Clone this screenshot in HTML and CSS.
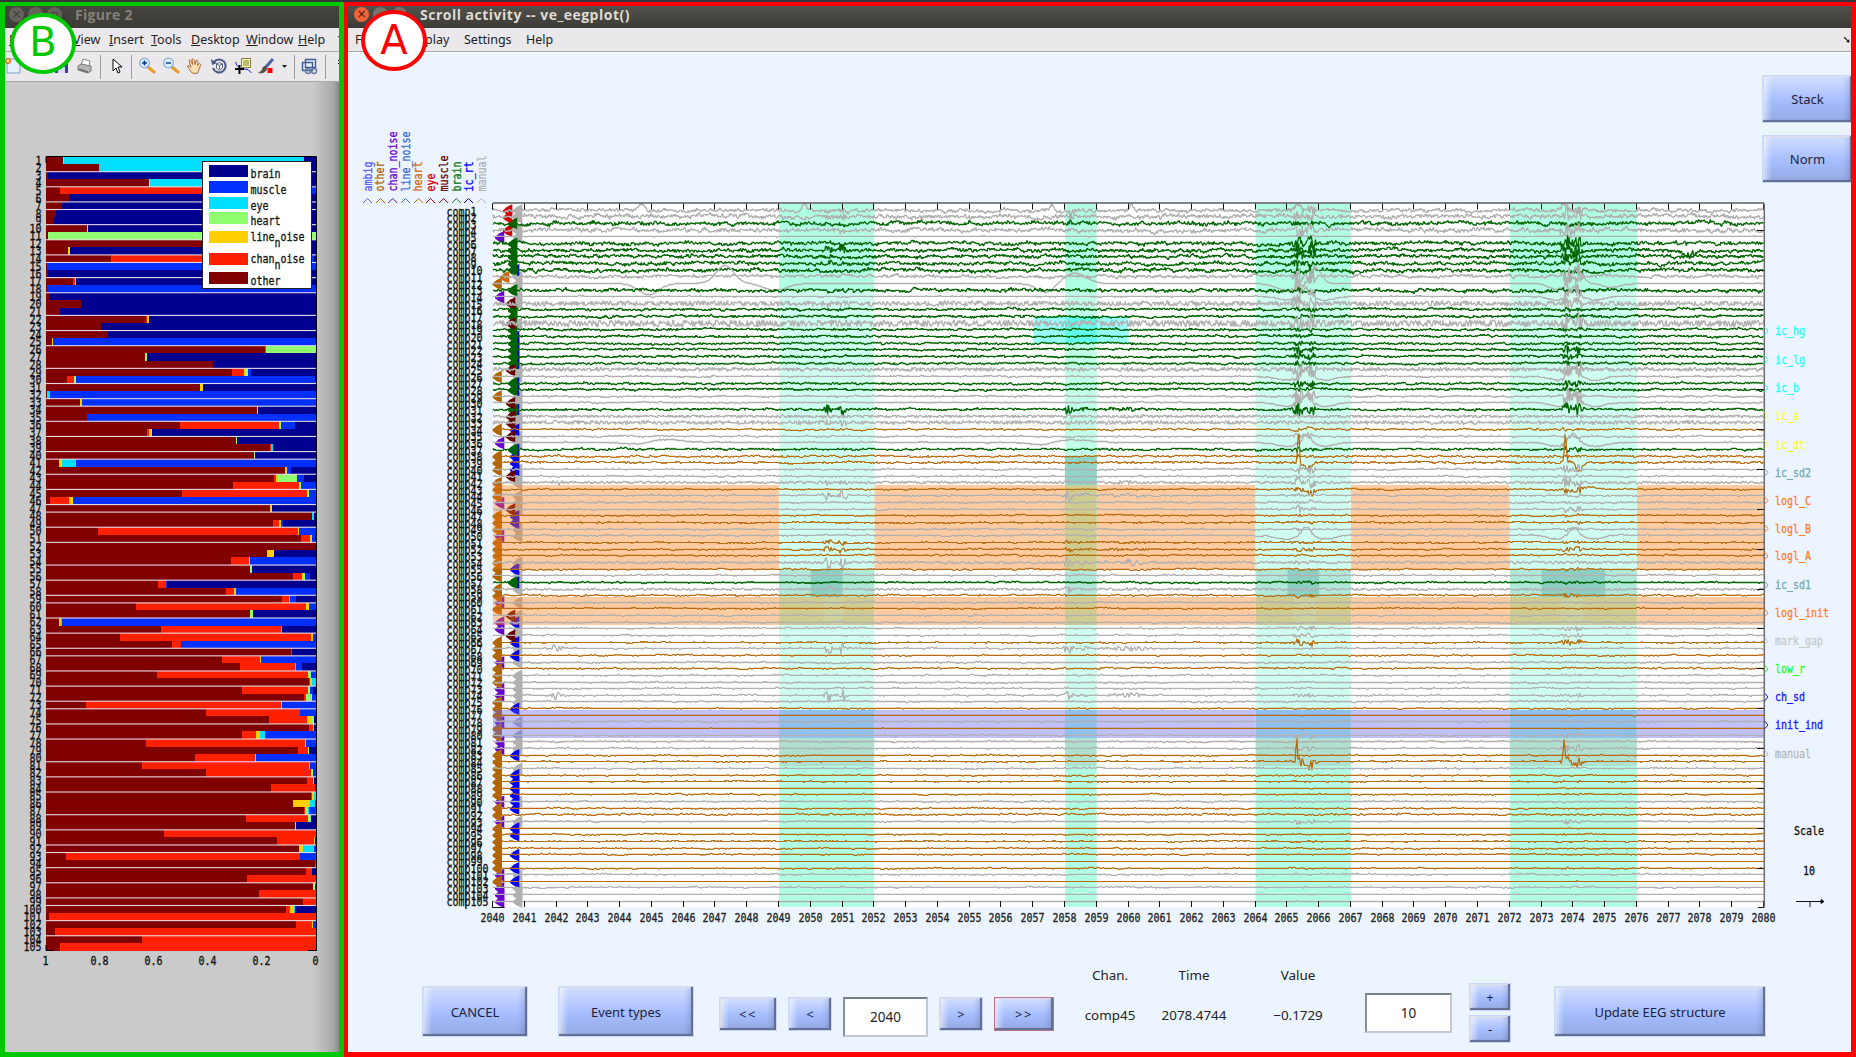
FILE: index.html
```html
<!DOCTYPE html>
<html lang="en">
<head>
<meta charset="utf-8">
<title>Scroll activity -- ve_eegplot()</title>
<link rel="stylesheet" href="styles.css">
</head>
<body>
<div class="desktop">
  <section class="window figure">
    <div class="badge badge-b"><span>B</span></div>
    <header class="titlebar dim">
      <i class="dot">×</i><i class="dot"></i><i class="dot">▫</i><b class="figure-title">Figure 2</b>
    </header>
    <nav class="menubar figure-menu">
      <span class="m-file"><u>F</u></span><span class="m-view"><u>V</u>iew</span><span class="m-insert"><u>I</u>nsert</span><span class="m-tools"><u>T</u>ools</span><span class="m-desk"><u>D</u>esktop</span><span class="m-win"><u>W</u>indow</span><span class="m-help"><u>H</u>elp</span><span class="m-more">↴</span>
    </nav>
    <svg class="toolbar" width="334" height="30" viewBox="5 52 334 30">
      <path d="M7 59h9l4 4v10h-13z" fill="#e4f0fc" stroke="#7f9fd0"/><circle cx="8" cy="61" r="2.5" fill="#ffd070" stroke="#d84a18"/>
      <path d="M55 58h13v15h-13z" fill="#3b3f97"/><path d="M58 59h7v5h-7zM58 67h7v6h-7z" fill="#d8dcf4"/>
      <path d="M81 66l2-7 7 2-1 5z" fill="#fff" stroke="#888"/><path d="M78 66l3-2 10 2v5l-3 2-10-3z" fill="#b5b5b5" stroke="#777"/><path d="M79 69l9 3" stroke="#555"/>
      <path d="M100.500 55v24M131.500 55v24M294.500 55v24M325.500 55v24" stroke="#9a9a9a"/>
      <path d="M113 59v12l3-3 2 5 2-1-2-5h4z" fill="#fff" stroke="#000"/>
      <g id="zoom"><path d="M148 67l6 5" stroke="#e49b2e" stroke-width="3" stroke-linecap="round"/><circle cx="144.500" cy="63" r="4.800" fill="#d8f0ff" stroke="#8baed4" stroke-width="1.300"/></g>
      <use href="#zoom" x="24"/>
      <path d="M142 63h5M144.500 60.500v5M166 63h5" stroke="#103c90" stroke-width="1.600"/>
      <path d="M192 73c-2-3-4-5-4.500-7 1-1 2 0 3.500 1.500l-2-7c1-1 2 0 2.500 1l1 3-.500-5c1-1 2 0 2.500 1l.5 4 1-4c1-1 2 0 2 1l-.5 4 2-2c1 0 1.500 1 1 2l-2 5-1 3z" fill="#ffe0b4" stroke="#a86c3c"/>
      <path d="M214 62a6.500 6.500 0 1 1-1 6" fill="none" stroke="#4a5a80" stroke-width="2"/><path d="M211 59l1 6 5-2z" fill="#4a5a80"/><path d="M216.500 64l3-1.500 3 1.500v4l-3 2-3-2zM216.500 64l3 1.500 3-1.500M219.500 65.500v4" fill="#fff" stroke="#54617f"/>
      <path d="M235.500 62q3 8 8 7t8 4" fill="none" stroke="#1818ff"/><path d="M241.500 58.500h9v9h-9z" fill="#ffffae" stroke="#88803c"/><path d="M243 61h6M243 63h6M243 65h6" stroke="#77733d"/><path d="M235 69h9M239.500 65v9" stroke="#000" stroke-width="2"/>
      <path d="M273 59l-8 9" stroke="#5060b0" stroke-width="3"/><path d="M266 66c-3 0-4 2-4 4l-4 3c5 1 9-1 9-5z" fill="#554"/><path d="M267.500 68h5v5h-5z" fill="#f00"/>
      <path d="M282 65h5l-2.500 3z" fill="#222"/>
      <path d="M305.500 59.500h10v8h-10zM302.500 62.500h10v8h-10z" fill="#e8eef8" stroke="#3d5c92" stroke-width="1.400"/><circle cx="308" cy="71" r="2.500" fill="none" stroke="#667b9d" stroke-width="1.500"/><circle cx="314" cy="71" r="2.500" fill="none" stroke="#667b9d" stroke-width="1.500"/>
      <path d="M338 60l2 2-2 2" fill="none" stroke="#222"/>
      <path d="M5 81.500h334" stroke="#a9a6aa"/>
    </svg>
    <svg class="bar-chart" id="bars" width="334" height="970" viewBox="5 82 334 970"></svg>
  </section>

  <section class="window scroller">
    <div class="badge badge-a"><span>A</span></div>
    <header class="titlebar">
      <i class="dot close">×</i><i class="dot"></i><i class="dot"></i><b class="scroller-title">Scroll activity -- ve_eegplot()</b>
    </header>
    <nav class="menubar scroller-menu">
      <span class="s-file">F</span><span class="s-display">play</span><span class="s-settings">Settings</span><span class="s-help">Help</span><span class="s-more">➘</span>
    </nav>
    <main class="workspace">
      <svg class="traces" id="traces" width="1414" height="893" viewBox="348 52 1414 893"></svg>
      <aside class="side">
        <button class="btn side-btn">Stack</button>
        <button class="btn side-btn">Norm</button>
        <svg class="marks" id="marks" width="89" height="762" viewBox="1762 183 89 762"></svg>
      </aside>
    </main>
    <footer class="controls">
      <button class="btn cancel">CANCEL</button>
      <button class="btn events">Event types</button>
      <div class="pager">
        <button class="btn far">&lt;&lt;</button>
        <button class="btn near">&lt;</button>
        <div class="field position">2040</div>
        <button class="btn near">&gt;</button>
        <button class="btn far focused">&gt;&gt;</button>
      </div>
      <dl class="readout">
        <dt>Chan.</dt><dt>Time</dt><dt>Value</dt>
        <dd>comp45</dd><dd>2078.4744</dd><dd>−0.1729</dd>
      </dl>
      <div class="field scale">10</div>
      <div class="stepper"><button class="btn step">+</button><button class="btn step">-</button></div>
      <button class="btn update">Update EEG structure</button>
    </footer>
  </section>
</div>
<script src="plots.js"></script>
</body>
</html>
```
FILE: styles.css
```css
* { box-sizing: border-box; }
body { margin: 0; background: #35343a; font-family: "Noto Sans", "Open Sans", sans-serif; color: #222; overflow: hidden; }
.desktop { display: flex; width: 1856px; height: 1057px; padding-top: 2px; }
.window { position: relative; display: flex; flex-direction: column; height: 1055px; overflow: hidden; }
.figure { width: 344px; border: 5px solid #00c800; border-top-width: 4px; background: #cacaca; }
.scroller { width: 1512px; border: 5px solid #f00; border-left-width: 4px; border-top-width: 4px; background: #ecf5ff; }
.badge { position: absolute; z-index: 2; display: flex; align-items: center; justify-content: center; width: 66px; height: 61px; border: 4px solid; border-radius: 50%; background: #fff; font: 40px/1 "DejaVu Sans", sans-serif; }
.badge-a { left: 13px; top: 4px; color: #f00; }
.badge-b { left: 5px; top: 7px; color: #00c800; }
.badge-b span { position: relative; top: -2px; }
.badge-a span { position: relative; top: -1px; }
.titlebar { display: flex; flex: none; align-items: center; height: 22px; padding: 0 0 5px 6px; gap: 4px; background: linear-gradient(#53514b, #3c3b37); color: #dfdbd2; font-size: 14px; white-space: nowrap; }
.titlebar b { font-family: "Open Sans", sans-serif; }
.dim { color: #85827b; padding-left: 4px; background: linear-gradient(#45443f, #3c3b37); }
.dot { width: 15px; height: 15px; border-radius: 50%; background: #77746c; color: #3c3b37; font: 12px/14px "DejaVu Sans", sans-serif; text-align: center; }
.dim .dot { background: #65625c; }
.dot.close { background: #ee6337; color: #4a1c0c; }
.figure-title { margin-left: 9px; letter-spacing: .3px; }
.scroller-title { margin-left: 9px; letter-spacing: .5px; }
.menubar { display: flex; flex: none; height: 24px; background: #ebe8ec; border-bottom: 1px solid #a9a6aa; font-size: 12.500px; line-height: 23px; white-space: nowrap; }
.menubar span { flex: none; }
.figure-menu { padding-left: 4px; }
.m-file { width: 64px; }
.m-view { width: 36px; }
.m-insert { width: 42px; }
.m-tools { width: 40px; }
.m-desk { width: 55px; }
.m-win { width: 52px; }
.m-help { width: 37px; }
.m-more { font-family: "DejaVu Sans", sans-serif; }
.scroller-menu { padding-left: 7px; }
.s-file { width: 70px; }
.s-display { width: 39px; }
.s-settings { width: 62px; }
.s-more { margin-left: auto; font-family: "DejaVu Sans", sans-serif; font-size: 10px; color: #000; }
.toolbar { flex: none; display: block; background: #ebe8ec; }
.bar-chart { flex: none; display: block; background: linear-gradient(to right, #cacaca 0 307px, #aaa 328px, #888 334px); }
.bar-chart text, .traces text, .marks text { font-family: "DejaVu Sans Mono", monospace; font-size: 10px; stroke-width: .25px; }
.workspace { display: flex; flex: none; height: 893px; border-top: 1px solid #fff; }
.traces { flex: none; overflow: visible; margin-top: -1px; }
.side { display: flex; flex: none; flex-direction: column; width: 89px; padding-top: 22px; }
.side-btn { flex: none; width: 91px; height: 48px; margin-bottom: 12px; font-size: 12.500px; }
.marks { flex: none; margin-top: -12px; overflow: visible; }
.btn { flex: none; padding: 0; font-family: "Noto Sans", sans-serif; font-size: 13px; color: #20223c; border: 1px solid #b4c6fb; outline: 1px solid #c7d7ff; outline-offset: -1px; background: linear-gradient(to right, rgba(255,255,255,.6), rgba(255,255,255,0) 9px, rgba(60,70,120,0) calc(100% - 9px), rgba(60,70,120,.22)), linear-gradient(#d3dfff, #a7beff 52%, #93a8e2); box-shadow: inset -2px -2px 1px #626c91, inset 1px 1px #e0dde5; white-space: nowrap; }
.controls { display: flex; flex: none; align-items: flex-start; height: 107px; padding: 41px 0 0 74px; }
.cancel { width: 106px; height: 51px; margin-right: 30px; }
.events { width: 136px; height: 51px; margin-right: 25px; }
.pager { display: flex; flex: none; gap: 11px; padding-top: 11px; width: 336px; }
.far { width: 58px; height: 34px; letter-spacing: 1.500px; }
.near { width: 44px; height: 34px; }
.focused { width: 60px; border-color: #c06f8e; outline-color: #c06f8e; }
.field { display: flex; flex: none; align-items: center; justify-content: center; border: 2px solid #c2c8d5; border-top-color: #777d89; border-left-color: #8a909e; background: #fff; font-size: 13.500px; }
.position { width: 85px; height: 40px; }
.readout { display: grid; flex: none; grid-template-columns: 84px 84px 124px; grid-template-rows: 40px 40px; align-items: center; justify-items: center; width: 292px; margin: -31px 0 0 13px; font-size: 13.400px; }
.readout dd { margin: 0; }
.scale { width: 87px; height: 40px; margin: 7px 0 0 5px; }
.stepper { display: flex; flex: none; flex-direction: column; gap: 4px; margin: -3px 43px 0 17px; }
.step { width: 42px; height: 28px; }
.update { width: 212px; height: 51px; }
```
FILE: plots.js
```js
const NS = 'http://www.w3.org/2000/svg';

function add(parent, name, attrs, text) {
  const node = document.createElementNS(NS, name);
  for (const key in attrs) node.setAttribute(key, attrs[key]);
  if (text !== undefined) node.textContent = text;
  parent.appendChild(node);
  return node;
}
const rect = (p, x, y, w, h, fill, extra) => add(p, 'rect', Object.assign({ x, y, width: w, height: h, fill }, extra));
// Tall, narrow fixed-width label, centred vertically on y.
function label(p, x, y, text, anchor = 'start', fill = '#111', rotate = '') {
  return add(p, 'text', { 'text-anchor': anchor, fill, stroke: fill, transform: `translate(${x} ${y})${rotate} scale(1 1.2)`, y: 3.5 }, text);
}

/* ---------- classification probabilities ---------- */
const HUE = { o: '#800000', c: '#ff2000', l: '#ffcf00', h: '#8fff70', e: '#00dfff', m: '#0030ff', b: '#00008f' };
// Class and right edge of every segment, on a 138..948 axis.
const ROWS = `o189 l192 e912 b948|o297 e936 b948|o144 b948|o446 l449 e930 b948|o180 c933 m948|o210 b948|o186 b948|o168 b948|o159 b948|o261 h264 b948
o144 h948|o930 b948|o204 l210 b948|o333 c930 m942 b948|o140 m948|o145 b948|o219 c225 h228 b948|o142 m948|o148 b948|o242 b948
o180 b948|o438 c441 l447 b948|o303 b948|o323 b948|o156 l159 m948|o795 c798 h948|o435 l438 h441 b948|o639 b948|o696 c732 l735 h744 m752 b948|o201 c222 h228 m946 b948
o600 l609 b948|o142 e150 m948|o240 l246 m948|o771 l774 b948|o261 m948|o540 c837 h843 m885 b948|o441 c447 l456 b948|o708 h711 b948|o810 c814 e819 b948|o762 h765 b948
o178 l186 e228 m948|o855 l861 m872 b948|o822 c828 l833 h891 m912 b948|o699 c897 h903 m948|o546 c921 h926 m948|o149 c207 l219 m948|o810 l816 b948|o936 e941 b948|o819 c837 l843 m848 b948|o294 c894 l897 m948
o903 c930 l936 m945 b948|o948|o801 l822 b948|o693 c747 l750 m948|o750 h756 b948|o879 c906 l909 h915 m930 b948|o474 c498 m501 b948|o678 c702 l705 h708 m948|o846 c867 e870 m888 b948|o408 c918 l927 m948
o750 h760 b948|o178 l183 e186 m948|o483 c843 e846 b948|o360 c933 l939 m948|o516 c543 m948|o873 c877 b948|o666 c780 l783 m948|o720 c885 e888 m906 b948|o471 c924 h933 m948|o928 c931 l935 e948
o726 c924 h930 m939 b948|o912 c918 h936 m948|o258 c843 l846 m948|o618 c900 m948|o807 c921 l937 h942 b948|o927 c938 h942 b948|o726 c768 l780 e795 m948|o438 c915 l918 m948|o894 c924 h927 b948|o585 c765 h768 m948
o426 c927 e930 m948|o618 c933 h940 m948|o921 c939 l942 b948|o813 c945 m948|o933 c936 l941 e948|o879 l930 e945 m948|o912 c916 h924 e927 m948|o738 c924 h933 b948|o885 l888 b948|o492 c948
o831 c941 l945 b948|o897 l909 e942 m948|o198 c900 m948|o945 c948|o918 c936 b948|o741 c948|o939 h944 m948|o777 c948|o909 c948|o858 c870 l882 e885 b948
o147 c948|o888 c936 l939 m948|o165 c948|o426 c948|o180 c948`.split(/[|\n]/);
const RULES = [2, 4, 6, 7, 9, 11, 13, 14, 16, 18, 21, 23, 25, 28, 30, 32, 33, 35, 37, 39, 40, 42, 44, 46, 47, 49, 51, 54, 56, 58, 59, 61, 63, 65, 66, 68, 70, 72, 73, 75, 77, 80, 82, 84, 87, 89, 91, 92, 94, 96, 98, 99, 101, 103];

const bars = document.getElementById('bars');
const step = 7.565, top0 = 156.5;
ROWS.forEach((row, i) => {
  let from = 138;
  for (const seg of row.split(' ')) {
    const to = +seg.slice(1);
    rect(bars, from / 3, top0 + i * step, (to - from) / 3, step + .1, HUE[seg[0]], { 'shape-rendering': 'crispEdges' });
    from = to;
  }
  label(bars, 41.500, top0 + 4 + i * step, i + 1, 'end');
});
RULES.forEach(n => rect(bars, 46, top0 + n * step - .5, 270, 1.100, '#e6d8e4'));
add(bars, 'path', { d: 'M46 156.500H316.500V951M46 157v6M46 945v5.500h7M308 950.500h8', fill: 'none', stroke: '#000' });
['1', '0.8', '0.6', '0.4', '0.2', '0'].forEach((t, i) => label(bars, 45.5 + i * 54, 961, t, 'middle'));
rect(bars, 202.5, 161.5, 109, 127, '#fff', { stroke: '#222' });
[['b', 'brain', 165, 174], ['m', 'muscle', 181, 190], ['e', 'eye', 197, 206], ['h', 'heart', 212, 221], ['l', 'line', 231, 237], ['c', 'chan', 253, 259], ['o', 'other', 272, 281]].forEach(([c, t, y, ty]) => {
  rect(bars, 209, y, 39, 12, HUE[c]);
  label(bars, 250.5, ty, t);
  if (c === 'l' || c === 'c') { label(bars, 274.5, ty + 6, 'n'); label(bars, 280.5, ty, 'oise'); }
});

/* ---------- scrolling activity ---------- */
const plot = document.getElementById('traces');
const X0 = 493, X1 = 1764, Y0 = 203.5, Y1 = 907.5, SEC = (X1 - X0) / 40;
const tx = t => X0 + (t - 2040) * SEC;
const ty = n => 209.8 + (n - 1) * 6.644;
const INK = { g: '#006400', y: '#b0b0b0', o: '#b86a0c' };
const GREEN = [3, 6, 7, 8, 9, 10, 13, 16, 17, 19, 20, 21, 22, 23, 24, 27, 28, 31, 37, 57];
const BROWN = [34, 38, 39, 43, 47, 48, 51, 52, 53, 55, 59, 61, 66, 68, 70, 76, 77, 79, 83, 84, 86, 87, 88, 89, 91, 92, 94, 95, 96, 97, 98, 99, 100, 102];
const KIND = Array.from({ length: 105 }, (_, i) => GREEN.includes(i + 1) ? 'g' : BROWN.includes(i + 1) ? 'o' : 'y');

rect(plot, X0, Y0, X1 - X0, Y1 - Y0, '#fff');
const MARK = {
  other: [492.5, '#b06500'], chan: [495, '#6a00d0'], heart: [500, '#d06a10'], eye: [503, '#d40000'],
  muscle: [506, '#640000'], ic: [510, '#0000ff'], brain: [508, '#006400'], manual: [513, '#b0b0b0']
};
const SETS = {
  manual: [], ic: [10, 20, 21, 22, 23, 24, 27, 28, 31, 34, 37, 38, 39, 40, 47, 48, 55, 57, 63, 66, 68, 76, 83, 86, 87, 88, 89, 90, 91, 94, 95, 98, 100, 102],
  brain: [], muscle: [15, 18, 25, 30, 32, 33, 35, 41, 46, 62, 65], eye: [1, 2, 4], heart: [11],
  chan: [5, 14, 36, 45, 50, 60, 63, 64, 69, 73, 74, 78, 81, 82, 90, 93, 101, 103, 104, 105],
  other: [12, 26, 29, 34, 38, 39, 40, 42, 43, 44, 47, 48, 49, 51, 52, 53, 54, 55, 56, 58, 59, 61, 66, 67, 68, 70, 71, 72, 75, 76, 77, 79, 80, 83, 84, 85, 86, 87, 88, 89, 91, 92, 94, 95, 96, 97, 98, 99, 100, 102]
};
KIND.forEach((k, i) => { if (k === 'y') SETS.manual.push(i + 1); if (k === 'g') SETS.brain.push(i + 1); });
for (const name in SETS) {
  const [x, fill] = MARK[name];
  for (const n of SETS[name]) {
    const y = ty(n) + 1;
    add(plot, 'path', { d: `M${x} ${y - .5}L${x + 4} ${y - 4}L${x + 9.3} ${Math.max(204, y - 6.5)}V${y + 6}L${x + 4} ${y + 4}L${x} ${y + 1}z`, fill });
  }
}

const band = (t0, t1, y0, y1, fill, extra) => rect(plot, tx(t0), y0, (t1 - t0) * SEC, y1 - y0, fill, extra);
const ORANGE = 'rgb(255,125,25)';
[[2040, 2049], [2052, 2064], [2067, 2072], [2076, 2080]].forEach(([a, b]) => {
  band(a, b, 485, 569, ORANGE, { 'fill-opacity': .4 });
  band(a, b, 597, 625, ORANGE, { 'fill-opacity': .4 });
  band(a, b, 710, 738, '#6a62ff', { 'fill-opacity': .4 });
});
[[2049, 2052], [2058, 2059], [2064, 2067], [2072, 2076]].forEach(([a, b]) => {
  const narrow = a === 2058;
  [[204, 290, '#b0ffe4'], [290, 569, narrow ? '#c2ffea' : '#cffff0'], [569, 597, '#b0e8da'], [597, 625, '#d0cc90'], [625, 710, '#cffff0'], [710, 738, '#90c0f0'], [738, 766, '#b0e0d0'], [766, 907, '#b0ffe4']]
    .forEach(([y0, y1, fill]) => band(a, b, y0, y1, fill));
});
band(2057, 2060, 316, 343, '#98ffff');
band(2058, 2059, 316, 343, '#60ffee');
band(2058, 2059, 456, 485, '#90d4c8');
band(2058, 2059, 485, 569, '#d0cc90');
band(2050, 2051, 569, 597, '#8cd0c4');
band(2065, 2066, 569, 597, '#8cd0c4');
band(2073, 2075, 569, 597, '#8cd0c4');
band(2050.4, 2051, 598, 624, '#cfd29c');
band(2065.200, 2065.900, 598, 624, '#cfd29c');
band(2073.600, 2074.300, 598, 624, '#cfd29c');

let seed = 7;
const rnd = () => { seed = (seed * 1664525 + 1013904223) >>> 0; return seed / 4294967296 - .5; };
const bell = (t, c, w) => { const u = (t - c) / w; return Math.exp(-u * u); };
const AMP = { 1: 1.6, 2: 1.9, 3: 1.7, 4: 1.9, 5: .3, 6: 1.6, 7: 1.6, 8: 1.5, 9: 1.6, 10: 1.6, 11: 1.4, 12: .25, 13: 1.5, 14: .4, 15: 1.5, 16: 1, 17: 1, 18: 2, 25: 1.05, 26: .5, 29: .6, 30: .5, 32: .7, 33: 1, 34: .7, 35: .6, 36: .4, 42: .7, 56: .5, 54: .7, 59: .65, 70: .65, 92: .7, 88: .25, 99: .1, 102: .1, 104: .1, 105: .1, 77: .25, 79: .25, 94: .25 };
const FAST = new Set([15, 18, 25, 32, 33, 42, 54, 58]);
const BURST = { 1: 7, 2: 9, 3: 4, 4: 6, 6: 9, 7: 14, 8: 5, 9: 5, 11: 5, 15: 7, 31: 15, 32: 8, 33: 9, 42: 9, 44: 20, 51: 9, 52: 13, 54: 20, 58: 9, 67: 20, 74: 17 };
const SHOCK = { 1: 14, 2: 20, 3: 8, 4: 18, 6: 22, 7: 22, 8: 16, 9: 15, 10: 12, 11: 28, 12: 24, 13: 6, 14: 20, 15: 20, 16: 7, 17: 7, 18: 26, 19: 6, 21: 6, 22: 14, 23: 14, 24: 8, 25: 26, 26: 14, 27: 11, 28: 6, 29: 24, 30: 16, 31: 20, 35: 8, 36: 9, 37: 8, 39: 9, 40: 14, 42: 18, 43: 12, 46: 11, 52: 7, 59: 7, 66: 12, 84: 20, 93: 8, 74: 7, 82: 11, 80: 10, 64: 8, 65: 8 };
KIND.forEach((kind, i) => {
  const n = i + 1, base = Math.round(ty(n)) + .5 - (n > 1 && n % 3 === 0 ? 0 : .2);
  const amp = AMP[n] ?? (n < 40 ? .85 : n < 60 ? .56 : .5);
  let slow = 0, drift = 0, d = '';
  for (let x = X0; x <= X1; x += n < 34 ? .7 : 1) {
    const t = 2040 + (x - X0) / SEC;
    slow = slow * .8 + rnd() * 1.2;
    drift = drift * .97 + rnd() * .3;
    let v = FAST.has(n) ? rnd() * 4.6 * amp : (slow + drift + rnd() * 2.2) * amp;
    const shock = Math.max(bell(t, 2065.350, .17), bell(t, 2065.750, .14), bell(t, 2073.800, .17), bell(t, 2074.150, .14));
    v += rnd() * shock * (SHOCK[n] || (n < 60 ? 4 : 1.5));
    if (BURST[n]) {
      v += rnd() * BURST[n] * Math.max(bell(t, 2050.550, .13), bell(t, 2051, .13));
      if (n > 30) v += rnd() * BURST[n] * Math.max(bell(t, 2058.100, .13), bell(t, 2058.600, .2) * .3, bell(t, 2060, .7) * .35);
      if ([42, 67, 74].includes(n)) v += rnd() * BURST[n] * .6 * bell(t, 2042, .2);
      if (n < 5) v += rnd() * BURST[n] * bell(t, 2058.200, .2);
    }
    // Eye blinks and slow electrode drifts.
    if (n === 12) {
      v += 15 * bell(t, 2044.900, .45) - 24 * bell(t, 2047.300, .4) + 9 * bell(t, 2048.900, .5);
      v += 12 * bell(t, 2057.400, .4) - 14 * bell(t, 2058.300, .5) + 9 * bell(t, 2065, .5) - 20 * bell(t, 2065.900, .25) + 8 * bell(t, 2073.500, .4) - 22 * bell(t, 2074.100, .25) + 5 * bell(t, 2075.200, .4);
    }
    if ([14, 26, 30, 36, 50].includes(n)) v += 5 * bell(t, 2065, .5) - 13 * bell(t, 2065.600, .2) + 5 * bell(t, 2066.200, .4) + 5 * bell(t, 2073.500, .4) - 13 * bell(t, 2074, .2) + 5 * bell(t, 2074.700, .4);
    if (n === 36) v += 2 * bell(t, 2044.500, .5) - 4 * bell(t, 2045.500, .6) + 4 * bell(t, 2057.300, .5) - 4 * bell(t, 2058.200, .8);
    if (n === 1) v += -9 * bell(t, 2044.700, .12) + 3 * bell(t, 2046, .4) - 10 * bell(t, 2049.800, .08) - 8 * bell(t, 2057.600, .08) - 8 * bell(t, 2060.100, .1) - 10 * bell(t, 2065.300, .1) - 10 * bell(t, 2073.700, .1);
    if (n === 7) v += 7 * bell(t, 2077.700, .25) + rnd() * 12 * bell(t, 2077.700, .15);
    if (n === 39) v += 7 * bell(t, 2065.650, .15) - 42 * bell(t, 2065.350, .04) + 12 * bell(t, 2074.200, .12) - 38 * bell(t, 2073.750, .04);
    if (n === 34) v += 4 * bell(t, 2065.250, .1) - 3 * bell(t, 2065.700, .1);
    if (n === 43) v += 5 * bell(t, 2065.700, .25) + 5 * bell(t, 2074.100, .15) - 3 * bell(t, 2074.500, .4);
    if (n === 84) v += 6 * bell(t, 2065.700, .2) - 30 * bell(t, 2065.300, .035) + 6 * bell(t, 2074.100, .15) - 28 * bell(t, 2073.700, .035);
    d += (d ? 'L' : 'M') + x.toFixed(1) + ' ' + Math.max(204, base + Math.round(v * .75)).toFixed(1);
  }
  add(plot, 'path', { d, fill: 'none', stroke: INK[kind], 'stroke-width': kind === 'o' ? 1.2 : 1.3, 'stroke-linejoin': 'bevel' });
});

// Axes, ticks and row names.
let ticks = `M${X0} ${Y0 - .5}H${X1}M${X0 - .5} ${Y0}v6M${X0 - .5} 901v6.500h12M${X1 - 6} 907.500h6`;
for (let s = 0; s <= 40; s++) {
  const x = Math.round(tx(2040 + s)) - .5;
  ticks += `M${x} ${Y0}v6M${x} 901v6`;
  label(plot, x, 918, 2040 + s, 'middle', '#222');
}
for (let n = 4; n < 105; n += 6) ticks += `M${X1 - 7} ${Math.round(ty(n)) + .5}h7`;
add(plot, 'path', { d: ticks, fill: 'none', stroke: '#111' });
add(plot, 'path', { d: `M${X1 + .3} ${Y0}V${Y1}`, stroke: '#6c6c70', 'stroke-width': 1.500 });
add(plot, 'path', { d: 'M465.500 213v695', stroke: '#111', 'stroke-opacity': .55 });
for (let n = 1; n <= 105; n++) label(plot, 446.500, 211.5 + (n - 1) * 6.64, 'comp' + n);

[['ambig', 369, 367.5, '#5a5aff'], ['other', 381, 380.5, '#b06500'], ['chan_noise', 393.5, 392.7, '#6a00d0'], ['line_noise', 407, 405.5, '#3a6ad8'], ['heart', 419, 418.6, '#d06a10'], ['eye', 432, 430.5, '#d40000'], ['muscle', 445, 443.7, '#640000'], ['brain', 457.5, 456.4, '#0a780a'], ['ic_rt', 469.5, 468.6, '#0000ff'], ['manual', 483, 481.5, '#b0b0b0']]
  .forEach(([t, x, cx, fill]) => {
    label(plot, x - .8, 191.5, t, 'start', fill, ' rotate(-90)');
    add(plot, 'path', { d: `M${cx - 4.5} 203l4.500-4.500 4.500 4.500`, fill: 'none', stroke: fill });
  });

/* ---------- mark names at the right edge ---------- */
const marks = document.getElementById('marks');
[['ic_hg', 331, '#20ffff'], ['ic_lg', 359.5, '#20ffff'], ['ic_b', 388, '#20ffff'], ['ic_a', 416, '#ffff20'], ['ic_dt', 444.5, '#ffff20'], ['ic_sd2', 472.5, '#78a8ac'], ['logl_C', 500.5, '#ff7f27'], ['logl_B', 528.5, '#ff7f27'], ['logl_A', 556, '#ff7f27'], ['ic_sd1', 585, '#78a8ac'], ['logl_init', 613, '#ff7f27'], ['mark_gap', 641, '#c8c8c8'], ['low_r', 669, '#20ff20'], ['ch_sd', 697, '#1818ff'], ['init_ind', 725, '#1818ff'], ['manual', 754, '#b8b8b8']]
  .forEach(([t, y, fill]) => {
    label(marks, 1775, y, t, 'start', fill);
    add(marks, 'path', { d: `M1764.500 ${y - 4}l3.500 4-3.500 4`, fill: 'none', stroke: fill });
  });
label(marks, 1809, 831, 'Scale', 'middle');
label(marks, 1809, 871, '10', 'middle');
add(marks, 'path', { d: 'M1796 901.500h27M1810 902v5M1821 899.500l3 2-3 2z', fill: '#111', stroke: '#111' });
```
